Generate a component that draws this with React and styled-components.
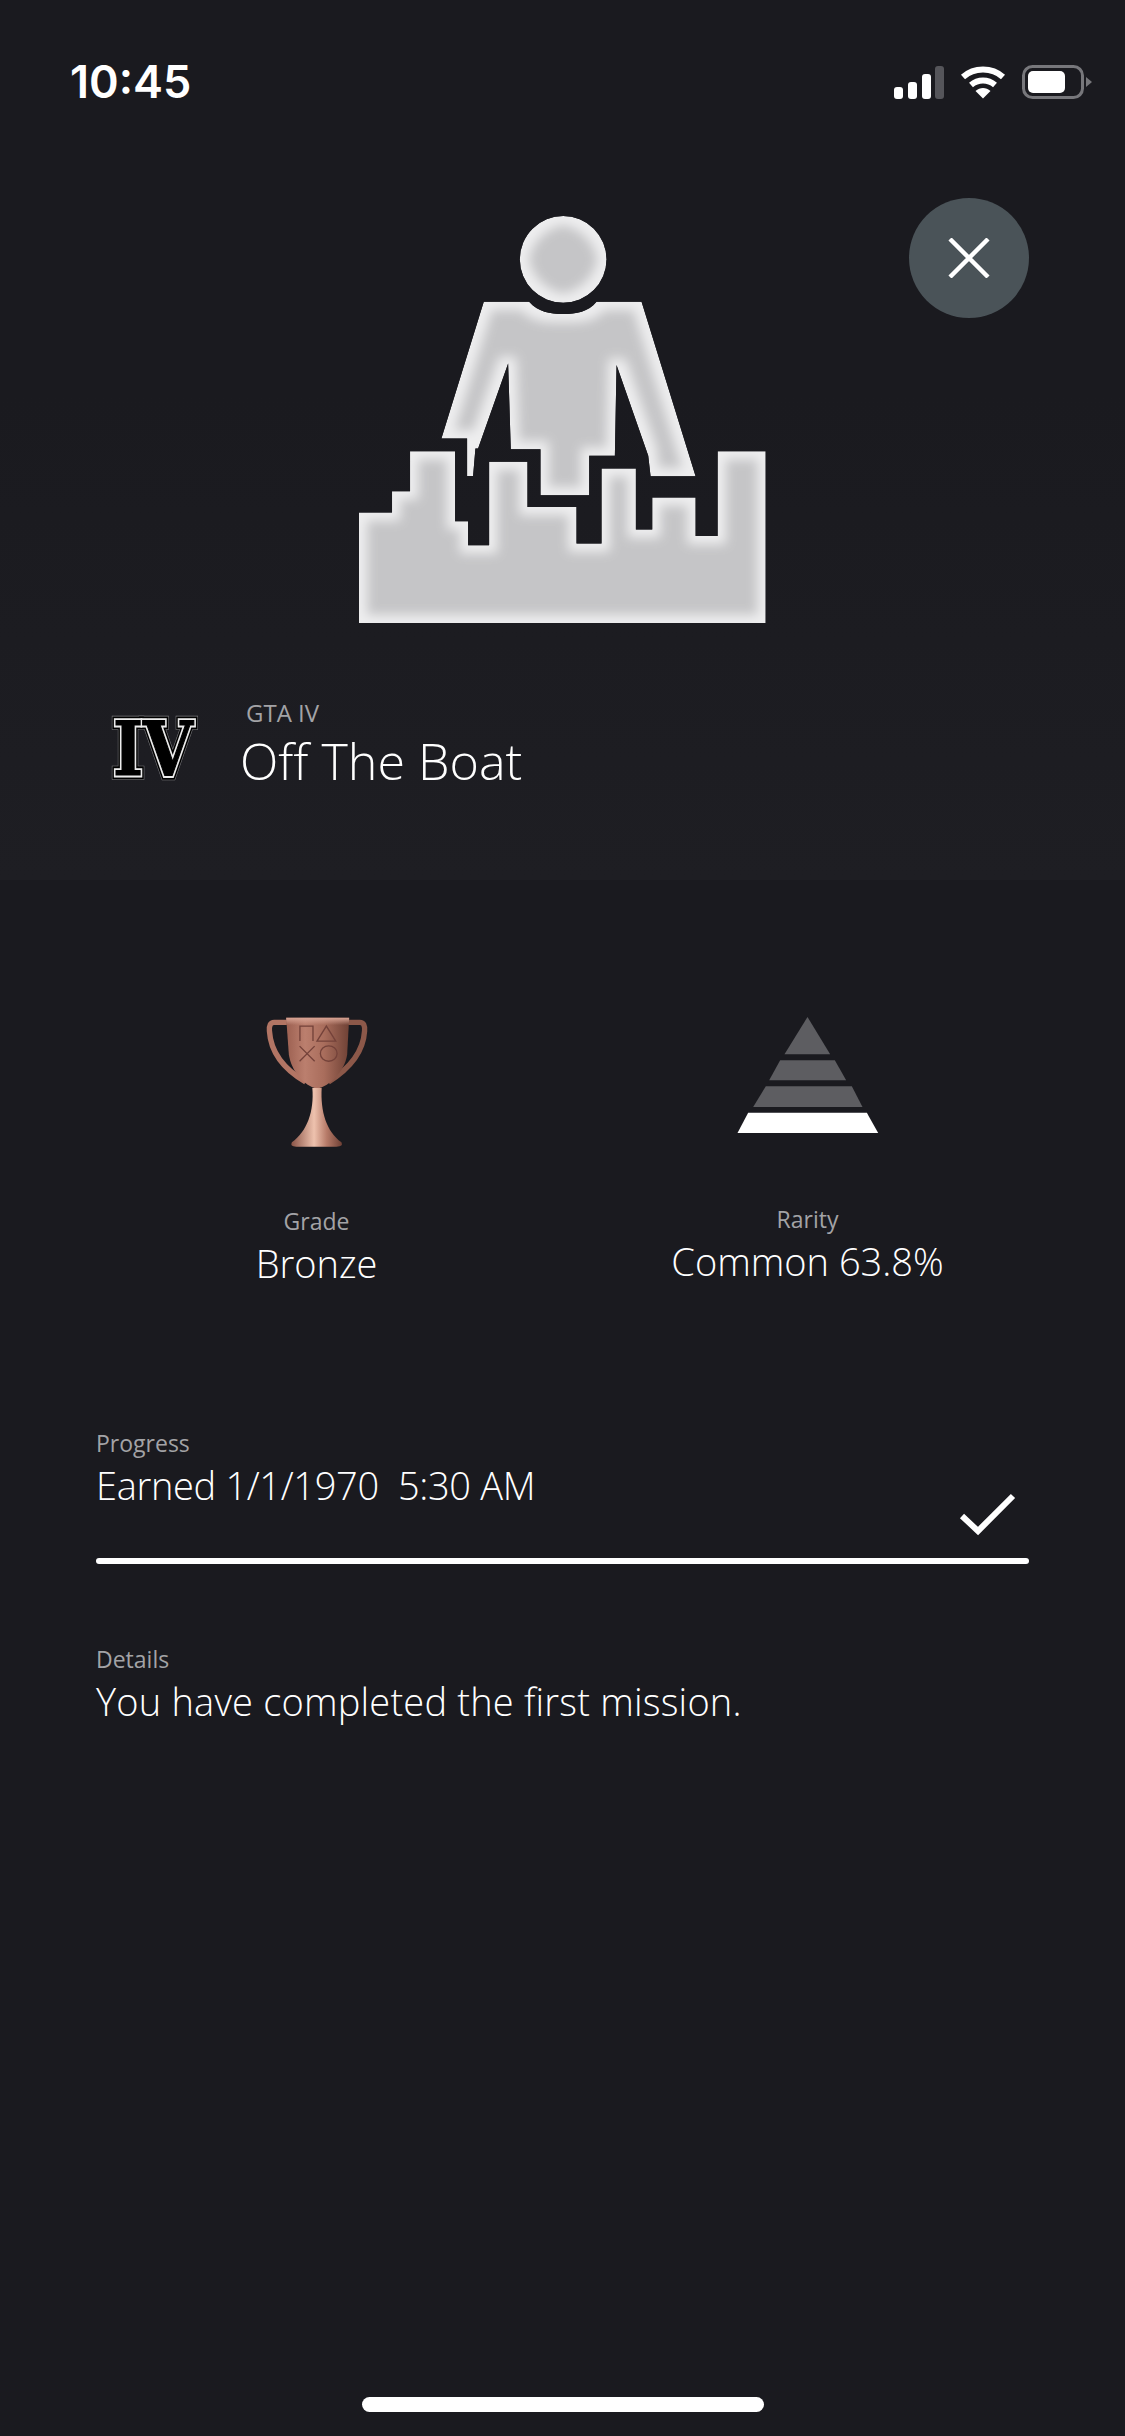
import styled, { createGlobalStyle } from 'styled-components';

const GlobalStyle = createGlobalStyle`
    html, body {
        margin: 0;
        padding: 0;
        background: #1a1a1f;
    }
    * {
        box-sizing: border-box;
    }
`

const Page = styled.div`
    width: 1125px;
    height: 2436px;
    position: relative;
    display: flex;
    flex-direction: column;
    overflow: hidden;
    background: #1a1a1f;
    color: #fff;
    font-family: "Open Sans", "Liberation Sans", sans-serif;
    font-weight: 300;
`

const Header = styled.header`
    height: 880px;
    flex: none;
    background: linear-gradient(180deg, #1a1a1f 0%, #1a1a1f 45%, #1e1e23 100%);
`

const StatusBar = styled.div`
    height: 216px;
    padding: 60px 33px 0 70px;
    display: flex;
    justify-content: space-between;
    align-items: flex-start;
`

const Clock = styled.div`
    font-family: Inter, Roboto, sans-serif;
    font-weight: 600;
    font-size: 45px;
    line-height: 44px;
`

const StatusIcons = styled.div`
    display: flex;
    align-items: center;
    gap: 16px;
    padding-top: 5px;
`

const CloseButton = styled.button`
    position: absolute;
    top: 198px;
    left: 909px;
    width: 120px;
    height: 120px;
    border: 0;
    padding: 0;
    border-radius: 50%;
    background: #4a5358;
    display: flex;
    align-items: center;
    justify-content: center;
`

const Hero = styled.div`
    display: flex;
    justify-content: center;
`

const TitleRow = styled.div`
    display: flex;
    align-items: flex-start;
    padding: 74px 0 0 93px;
`

const GameLogo = styled.svg`
    width: 120px;
    height: 92px;
    margin-top: 6px;
    flex: none;
`

const TitleText = styled.div`
    margin-left: 27px;
`

const GameName = styled.div`
    font-size: 24px;
    line-height: 32px;
    color: #a3a3a6;
    font-weight: 400;
    margin-left: 6px;
`

const AchievementName = styled.div`
    font-size: 50.2px;
    line-height: 60px;
    margin-top: 2px;
`

const Stats = styled.section`
    display: grid;
    grid-template-columns: 491px 491px;
    padding: 137px 0 0 71px;
`

const Stat = styled.div`
    display: flex;
    flex-direction: column;
    align-items: center;
`

const StatIcon = styled.div`
    height: 128px;
    display: flex;
    align-items: flex-start;
    margin-bottom: ${p => p.$gap}px;
`

const Label = styled.div`
    font-size: 23px;
    line-height: 30px;
    font-weight: 400;
    color: #a3a3a6;
`

const StatValue = styled.div`
    font-size: 38px;
    line-height: 50px;
    margin-top: 2px;
`

const Section = styled.section`
    padding: 0 96px;
    margin-top: ${p => p.$top}px;
`

const ProgressHead = styled.div`
    display: flex;
    justify-content: space-between;
    align-items: flex-end;
`

const ProgressText = styled.div`
    padding-bottom: 48px;
`

const BodyText = styled.div`
    font-size: 38px;
    line-height: 50px;
    margin-top: 2px;
    white-space: pre;
    letter-spacing: ${p => p.$spacing}px;
`

const CheckMark = styled.svg`
    width: 60px;
    height: 46px;
    margin-right: 12px;
    margin-bottom: 20px;
`

const ProgressBar = styled.div`
    height: 6px;
    background: #fff;
    border-radius: 3px;
`

const HomeIndicator = styled.div`
    position: absolute;
    left: 362px;
    top: 2397px;
    width: 402px;
    height: 15px;
    border-radius: 8px;
    background: #fff;
`

const Signal = () => (
    <svg width="50" height="33" viewBox="0 0 50 33">
        <rect x="0" y="21" width="9" height="12" rx="3" fill="#fff" />
        <rect x="14" y="16" width="9" height="17" rx="3" fill="#fff" />
        <rect x="28" y="8" width="9" height="25" rx="3" fill="#fff" />
        <rect x="41" y="0" width="9" height="33" rx="3" fill="#55555a" />
    </svg>
)

const Wifi = () => (
    <svg width="46" height="33" viewBox="0 0 46 33" fill="none" stroke="#fff" strokeWidth="6">
        <path d="M3 11 C14 1 32 1 43 11" />
        <path d="M11 19 C18 13 28 13 35 19" />
        <path d="M15.5 25 L23 32.5 L30.5 25 C26 21 20 21 15.5 25 Z" fill="#fff" stroke="none" />
    </svg>
)

const Battery = () => (
    <svg width="70" height="34" viewBox="0 0 70 34">
        <rect x="1.5" y="1.5" width="59" height="31" rx="9" fill="none" stroke="#77777b" strokeWidth="3" />
        <rect x="6" y="6" width="37" height="22" rx="5" fill="#fff" />
        <path d="M64 12 L70 17 L64 22 Z" fill="#77777b" />
    </svg>
)

const HeroIcon = () => (
    <svg width="407" height="407" viewBox="88 78 1220 1220">
        <defs>
            <filter id="bevel" x="-5%" y="-5%" width="110%" height="110%">
                <feMorphology in="SourceAlpha" operator="erode" radius="24" result="core" />
                <feGaussianBlur in="core" stdDeviation="16" result="soft" />
                <feFlood floodColor="#c5c5c7" />
                <feComposite in2="soft" operator="in" result="inner" />
                <feMerge result="merged">
                    <feMergeNode in="SourceGraphic" />
                    <feMergeNode in="inner" />
                </feMerge>
                <feComposite in="merged" in2="SourceAlpha" operator="in" />
            </filter>
        </defs>
        <g fill="#eeeeef" filter="url(#bevel)">
            <circle cx="700" cy="208" r="130" />
            <path d="M462 335 L598 335 C625 365 660 372 700 372 C740 372 775 365 800 335 L935 335 L1097 858 L962 858 L955 797 L860 525 L855 797 L778 797 L778 915 L632 915 L632 777 L543 777 L535 520 L445 775 L437 775 L430 857 L412 857 L412 745 L335 745 Z" />
            <path d="M88 1298 L88 967 L187 967 L187 903 L241 903 L241 783 L376 783 L376 993 L415 993 L415 1065 L478 1065 L478 815 L593 815 L593 950 L740 950 L740 1060 L815 1060 L815 835 L918 835 L918 1018 L967 1018 L967 922 L1097 922 L1097 1037 L1163 1037 L1163 783 L1307 783 L1307 1298 Z" />
        </g>
    </svg>
)

const Trophy = () => (
    <svg width="102" height="130" viewBox="110 78 304 388">
        <defs>
            <linearGradient id="cup" x1="0" x2="1" y1="0" y2="0">
                <stop offset="0" stopColor="#9c6051" />
                <stop offset="0.3" stopColor="#bb7f6e" />
                <stop offset="0.6" stopColor="#a96d5c" />
                <stop offset="1" stopColor="#6f4135" />
            </linearGradient>
            <linearGradient id="stem" x1="0" x2="1" y1="0" y2="0">
                <stop offset="0" stopColor="#8a5447" />
                <stop offset="0.45" stopColor="#eec2ae" />
                <stop offset="0.7" stopColor="#b67a68" />
                <stop offset="1" stopColor="#6d3f34" />
            </linearGradient>
            <linearGradient id="rim" x1="0" x2="0" y1="0" y2="1">
                <stop offset="0" stopColor="#d9a595" />
                <stop offset="1" stopColor="#d9a595" stopOpacity="0" />
            </linearGradient>
        </defs>
        <g fill="none" strokeWidth="16">
            <path d="M172 94 L134 94 Q118 94 120 120 C124 185 165 235 228 272" stroke="#b27564" />
            <path d="M352 94 L390 94 Q406 94 404 120 C400 185 355 235 296 272" stroke="#8c5849" />
        </g>
        <path d="M170 80 L358 80 L352 190 C345 240 300 285 262 292 C225 285 185 240 178 190 Z" fill="url(#cup)" />
        <path d="M170 80 L358 80 L357 102 L171 102 Z" fill="url(#rim)" />
        <path d="M248 290 L276 290 C272 360 290 420 335 452 Q342 465 320 465 L200 465 Q180 465 187 452 C232 420 254 360 248 290 Z" fill="url(#stem)" />
        <g fill="none" stroke="#74423a" strokeWidth="4">
            <path d="M211 150 L211 105 L250 105 L250 150" />
            <path d="M262 150 L290 105 L318 150 Z" />
            <path d="M210 165 L255 210 M255 165 L210 210" />
            <ellipse cx="297" cy="187" rx="25" ry="23" />
        </g>
    </svg>
)

const Pyramid = () => (
    <svg width="142" height="116" viewBox="115 50 423 348">
        <g fill="#5d5d61">
            <polygon points="325,50 393,162 256,162" />
            <polygon points="243,180 407,180 441,240 210,240" />
            <polygon points="200,258 458,258 490,320 162,320" />
        </g>
        <polygon points="147,337 503,337 537,398 115,398" fill="#fff" />
    </svg>
)

const logoText = { x: 60, y: 72, textLength: 80, lengthAdjust: 'spacingAndGlyphs' }

export default function App() {
    return (
        <Page>
            <GlobalStyle />
            <Header>
                <StatusBar>
                    <Clock>10:45</Clock>
                    <StatusIcons>
                        <Signal />
                        <Wifi />
                        <Battery />
                    </StatusIcons>
                </StatusBar>
                <CloseButton>
                    <svg width="42" height="40" viewBox="0 0 42 40" stroke="#fff" strokeWidth="4.4">
                        <path d="M2 1 L40 39 M40 1 L2 39" />
                    </svg>
                </CloseButton>
                <Hero>
                    <HeroIcon />
                </Hero>
                <TitleRow>
                    <GameLogo viewBox="0 0 120 92">
                        <g fontFamily="'DejaVu Serif', serif" fontWeight="700" fontSize="74" textAnchor="middle" strokeLinejoin="miter">
                            <text {...logoText} fill="#000" stroke="#7d7d80" strokeWidth="9.6">IV</text>
                            <text {...logoText} fill="#000" stroke="#000" strokeWidth="8.4">IV</text>
                            <text {...logoText} fill="#000" stroke="#ececec" strokeWidth="4.8">IV</text>
                            <text {...logoText} fill="#000" stroke="#000" strokeWidth="1.2">IV</text>
                        </g>
                    </GameLogo>
                    <TitleText>
                        <GameName>GTA IV</GameName>
                        <AchievementName>Off The Boat</AchievementName>
                    </TitleText>
                </TitleRow>
            </Header>
            <Stats>
                <Stat>
                    <StatIcon $gap={61}><Trophy /></StatIcon>
                    <Label>Grade</Label>
                    <StatValue>Bronze</StatValue>
                </Stat>
                <Stat>
                    <StatIcon $gap={59}><Pyramid /></StatIcon>
                    <Label>Rarity</Label>
                    <StatValue>Common 63.8%</StatValue>
                </Stat>
            </Stats>
            <Section $top={140}>
                <ProgressHead>
                    <ProgressText>
                        <Label>Progress</Label>
                        <BodyText $spacing={-0.33}>{'Earned 1/1/1970  5:30 AM'}</BodyText>
                    </ProgressText>
                    <CheckMark viewBox="0 0 60 46" fill="none" stroke="#fff" strokeWidth="6">
                        <path d="M5 24 L21 39 L56 4" />
                    </CheckMark>
                </ProgressHead>
                <ProgressBar />
            </Section>
            <Section $top={80}>
                <Label>Details</Label>
                <BodyText $spacing={0.2}>You have completed the first mission.</BodyText>
            </Section>
            <HomeIndicator />
        </Page>
    )
}
